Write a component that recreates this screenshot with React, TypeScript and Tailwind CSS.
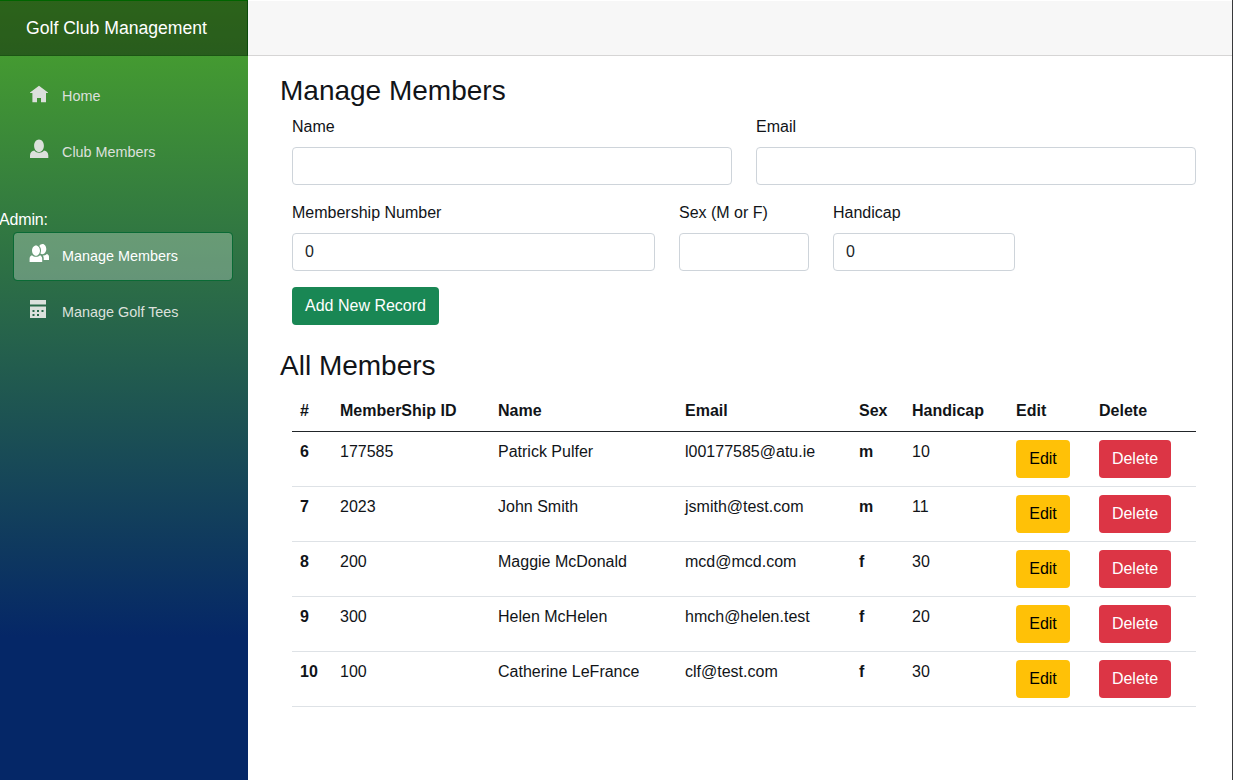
import React from "react";

const ICONS = {
  home: "M10 2.800L1 9.600v.4h2.400V19.200H8v-4.200h4v4.200h5V10h2v-.4z",
  person:
    "M10 .5c-2.800 0-4.900 2.900-4.900 6.200s2.100 6.300 4.900 6.300 4.900-3 4.900-6.300S12.800 .5 10 .5zM5.300 11.500C2.900 11.700 1 13.800 1 16.400V19h18.300v-2.600c0-2.600-1.900-4.700-4.300-4.900-1.200 1.500-2.900 2.200-4.900 2.200s-3.600-.7-4.800-2.200z",
  people:
    "M13.600 .9c-1.500 0-2.700 .8-3.300 2 1.100 1.200 1.700 2.600 1.700 4.400 0 1.200-.2 2.200-.6 3.100 .6 .5 1.300 .8 2.100 .8 2.100 0 3.800-2.300 3.800-5.100S15.700 .9 13.600 .9zM7 2.400c-2.200 0-4 2.400-4 5.200s1.800 5.200 4 5.200 4-2.400 4-5.200-1.800-5.200-4-5.200zM17.800 11.100c-1.100 1-2.400 1.500-4 1.500 .6 .8 .9 1.600 .9 2.700V17H20v-3.200c0-1.200-.9-2.300-2.200-2.700zM3 12.200C1.500 12.800 .6 14 .6 15.500V19H13.200v-3.500c0-1.400-.9-2.600-2.200-3.300-1.100 1-2.500 1.500-4 1.500s-2.900-.5-4-1.500z",
  calendar:
    "M1 1v4.500h16V1zM1 7.500V19h16V7.500zM3.500 11h2v2h-2zM8 11h2v2H8zM12.500 11h2v2h-2zM3.500 15h2v2h-2zM8 15h2v2H8z",
};

function NavItem({ icon, label, active }: { icon: keyof typeof ICONS; label: string; active?: boolean }) {
  return (
    <a
      className={
        "mr-[15px] ml-[13px] flex h-[49px] items-center rounded border pl-[15px] text-[14.4px] " +
        (active
          ? "border-[#0a6a35] bg-white/27 bg-clip-padding text-white"
          : "border-transparent text-[#dce0dc]")
      }
    >
      <svg viewBox="0 0 20 20" className="mt-[10px] h-5 w-5 shrink-0 self-start" fill="currentColor" fillRule="evenodd">
        <path d={ICONS[icon]} />
      </svg>
      <span className="ml-[13px]">{label}</span>
    </a>
  );
}

function Field({ label, value, className }: { label: string; value?: string; className: string }) {
  return (
    <label className={className}>
      <span className="mb-2 block h-6">{label}</span>
      <input
        readOnly
        value={value ?? ""}
        className="block h-[38px] w-full rounded border border-[#ced4da] bg-white px-3 text-base text-[#212529]"
      />
    </label>
  );
}

const members = [
  { n: 6, id: "177585", name: "Patrick Pulfer", email: "l00177585@atu.ie", sex: "m", hc: 10 },
  { n: 7, id: "2023", name: "John Smith", email: "jsmith@test.com", sex: "m", hc: 11 },
  { n: 8, id: "200", name: "Maggie McDonald", email: "mcd@mcd.com", sex: "f", hc: 30 },
  { n: 9, id: "300", name: "Helen McHelen", email: "hmch@helen.test", sex: "f", hc: 20 },
  { n: 10, id: "100", name: "Catherine LeFrance", email: "clf@test.com", sex: "f", hc: 30 },
];

export default function App() {
  return (
    <div className="flex h-[780px] w-[1233px] overflow-hidden bg-white font-['Liberation_Sans',Arial,sans-serif] text-base text-[#111418]">
      <aside className="w-[248px] shrink-0 bg-[linear-gradient(180deg,#4aa52c_0px,#052767_637px)]">
        <div className="flex h-14 items-center border-t border-r border-b border-t-[#006400] border-r-[#0b4a0b] border-b-[#1c5414] bg-black/40 pl-[26px] text-[17.6px] text-white">
          Golf Club Management
        </div>
        <nav className="flex flex-col pt-4">
          <NavItem icon="home" label="Home" />
          <div className="h-[7px]" />
          <NavItem icon="person" label="Club Members" />
          <div className="mt-[31px] -ml-px h-6 leading-6 tracking-[-0.15px] text-white">Admin:</div>
          <NavItem icon="people" label="Manage Members" active />
          <div className="h-[7px]" />
          <NavItem icon="calendar" label="Manage Golf Tees" />
        </nav>
      </aside>
      <div className="flex min-w-0 grow flex-col border-r border-[#38393b]">
        <header className="h-14 shrink-0 border-t border-b border-t-white border-b-[#d6d5d5] bg-[#f7f7f7]" />
        <main className="pt-[18px] pr-9 pl-8">
          <h1 className="h-[41px] text-[28px] leading-[34px]">Manage Members</h1>
          <div className="pl-3">
            <div className="flex gap-6">
              <Field label="Name" className="w-[440px]" />
              <Field label="Email" className="w-[440px]" />
            </div>
            <div className="mt-4 flex">
              <Field label="Membership Number" value="0" className="w-[363px]" />
              <Field label="Sex (M or F)" className="ml-6 w-[130px]" />
              <Field label="Handicap" value="0" className="ml-6 w-[182px]" />
            </div>
            <button className="mt-4 block h-[38px] w-[147px] rounded bg-[#198754] text-white">Add New Record</button>
          </div>
          <h1 className="mt-6 h-[41px] text-[28px] leading-[34px]">All Members</h1>
          <table className="ml-3 w-[904px] table-fixed border-collapse text-left">
            <colgroup>
              <col className="w-[40px]" />
              <col className="w-[158px]" />
              <col className="w-[187px]" />
              <col className="w-[174px]" />
              <col className="w-[53px]" />
              <col className="w-[104px]" />
              <col className="w-[83px]" />
              <col className="w-[105px]" />
            </colgroup>
            <thead>
              <tr className="h-[41px] border-b border-[#212529] align-top">
                {["#", "MemberShip ID", "Name", "Email", "Sex", "Handicap", "Edit", "Delete"].map((h) => (
                  <th key={h} className="p-0 pt-[9px] pl-2 font-bold">
                    {h}
                  </th>
                ))}
              </tr>
            </thead>
            <tbody>
              {members.map((m) => (
                <tr key={m.n} className="h-[55px] border-b border-[#dee2e6] align-top">
                  <td className="pt-2 pl-2 font-bold">{m.n}</td>
                  <td className="pt-2 pl-2">{m.id}</td>
                  <td className="pt-2 pl-2">{m.name}</td>
                  <td className="pt-2 pl-2">{m.email}</td>
                  <td className="pt-2 pl-2 font-bold">{m.sex}</td>
                  <td className="pt-2 pl-2">{m.hc}</td>
                  <td className="pt-2 pl-2">
                    <button className="block h-[38px] w-[54px] rounded bg-[#ffc107] text-black">Edit</button>
                  </td>
                  <td className="pt-2 pl-2">
                    <button className="block h-[38px] w-[72px] rounded bg-[#dc3545] text-white">Delete</button>
                  </td>
                </tr>
              ))}
            </tbody>
          </table>
        </main>
      </div>
    </div>
  );
}
